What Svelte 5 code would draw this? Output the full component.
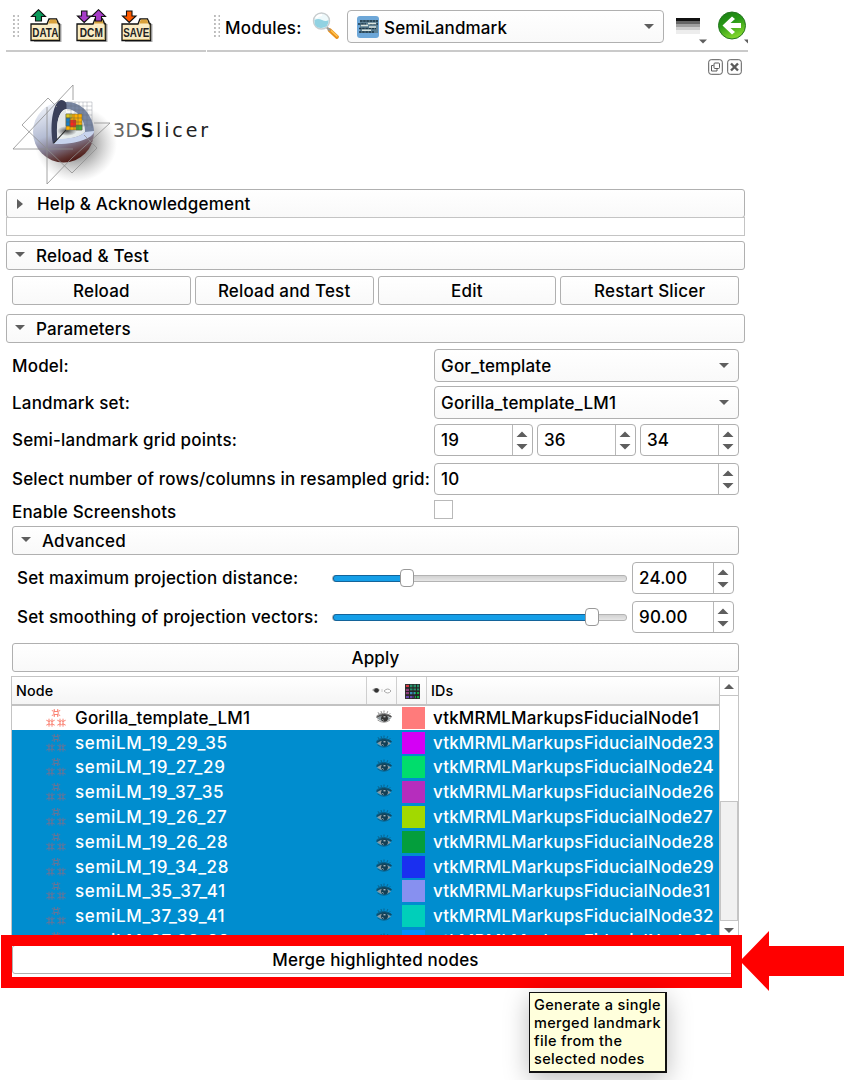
<script>
  const nodes = [
    ['Gorilla_template_LM1', '#ff7b7b', '1'],
    ['semiLM_19_29_35', '#d400f5', '23'],
    ['semiLM_19_27_29', '#00dd6c', '24'],
    ['semiLM_19_37_35', '#b62dbd', '26'],
    ['semiLM_19_26_27', '#a2d900', '27'],
    ['semiLM_19_26_28', '#049e3c', '28'],
    ['semiLM_19_34_28', '#1a2ff0', '29'],
    ['semiLM_35_37_41', '#8790f0', '31'],
    ['semiLM_37_39_41', '#00cfba', '32'],
    ['semiLM_37_38_39', '#0090ff', '33']
  ];
  const sliders = [
    { label: 'Set maximum projection distance:', fill: 25.2, value: '24.00' },
    { label: 'Set smoothing of projection vectors:', fill: 88.4, value: '90.00' }
  ];
  const files = [
    { label: 'DATA', up: '#0a9a5b', down: '' },
    { label: 'DCM', up: '#a63cc8', down: '#a63cc8' },
    { label: 'SAVE', up: '', down: '#ff5a00' }
  ];
</script>

{#snippet spin(value, cls)}
  <div class="spin {cls}">
    <span>{value}</span>
    <svg width="20" height="30" viewBox="0 0 20 30">
      <path d="M.5 0V30" stroke="#b8b8b8" />
      <path d="M4.500 12L10 6.500L15.500 12ZM4.500 19L10 24.500L15.500 19Z" fill="#5e5e5e" />
    </svg>
  </div>
{/snippet}

{#snippet combo(value)}
  <div class="combo"><span>{value}</span><i class="down"></i></div>
{/snippet}

{#snippet section(title, open)}
  <div class="section"><i class={open ? 'down' : 'right'}></i><span>{title}</span></div>
{/snippet}

{#snippet eye()}
  <svg class="eye" width="18" height="16" viewBox="0 0 18 16">
    <path d="M1.500 6Q8 .5 16 6M4 4L3 2.200M6.500 3L6 1M9 2.500V.5M12 3L12.800 1.200M14 4.500L15.300 3.200" fill="none" stroke="currentColor" stroke-width=".9" opacity=".6" />
    <path d="M2 8.500Q8 2 16 8.500Q9 14 2 8.500Z" fill="#8d989d" />
    <path d="M1.500 7.500Q8 2 16.500 7" fill="none" stroke="currentColor" stroke-width="1.500" opacity=".85" />
    <circle cx="9.500" cy="8.300" r="3.400" fill="currentColor" />
    <path d="M8.500 6.800h2M7.500 9.500l1 .7" stroke="#dce3e5" />
    <path d="M2.500 10Q9 14.500 15 10" fill="none" stroke="currentColor" opacity=".5" />
  </svg>
{/snippet}

{#snippet markers()}
  <svg class="markers" width="20" height="20" viewBox="0 0 20 20" fill="none" stroke="currentColor" stroke-width=".9">
    <path transform="translate(10 5)" d="M-4.200-2.500L-1.500-1.500L-1.800-4M4.200-2.500L1.500-1.500L1.800-4M-4.200 2.500L-1.500 1.500L-1.800 4M4.200 2.500L1.500 1.500L1.800 4M-1.500-1.500H1.500L2.500 0L1.500 1.500H-1.500L-2.500 0Z" />
    {#each [4.5, 15.5] as x}
      <path transform="translate({x} 14.700)" d="M-4.200-2.500L-1.500-1.200L-1.500-4M4.200-2.500L1.500-1.200V-4M-4.200 2.500L-1.500 1.200V4M4.200 2.500L1.500 1.200V4M-1.500-1.200L0-2L1.500-1.200V1.200L0 2L-1.500 1.200Z" />
    {/each}
  </svg>
{/snippet}

<div class="window">
  <header class="toolbar">
    <div class="files">
      <i class="grip"></i>
      {#each files as f}
        <svg class="file" width="34" height="35" viewBox="0 0 34 35">
          <path d="M3 15h16l2-4h7l2 4h1.500v18H4z" fill="#777" opacity=".6" />
          <path d="M1 15H17l2-5h7.500l2 5h1V31.500H1Z" fill="#faecc4" stroke="#111" stroke-width="1.300" />
          <path d="M18 14.500l2-4h6l1.500 4Z" fill="#d9a13c" />
          <path d="M2 30.500H28.700V15.500" fill="none" stroke="#bba566" />
          {#if f.up}<path transform="translate({f.down ? 14 : 0} 0)" d="M1.500 7.500L8.500 .7L15.500 7.500H11.500V12H5.500V7.500Z" fill={f.up} stroke="#111" stroke-width="1.100" />{/if}
          {#if f.down}<path d="M5.500 2H11V7H15L8.200 13.500L1.500 7H5.500Z" fill={f.down} stroke="#111" stroke-width="1.100" />{/if}
          <text x="15.300" y="27.800" textLength={f.label === 'DCM' ? 23 : 26} lengthAdjust="spacingAndGlyphs">{f.label}</text>
        </svg>
      {/each}
    </div>
    <div class="modules">
      <i class="grip"></i>
      <span class="mlabel">Modules:</span>
      <svg class="search" width="28" height="28" viewBox="0 0 28 28">
        <path d="M17.500 18L25 25" stroke="#e9901b" stroke-width="3.800" stroke-linecap="round" />
        <path d="M19 18.500L25.500 24.500" stroke="#ffc653" stroke-width="1.500" />
        <path d="M14.500 15L18 18.500" stroke="#999" stroke-width="2.200" />
        <circle cx="9.500" cy="9" r="8" fill="#eef9fb" stroke="#c8cdcf" stroke-width="1.400" />
        <path d="M2.500 8Q6 6 10 8T16.500 8Q17 15.500 9.500 16T2.500 8Z" fill="#91d2e2" />
        <path d="M4 6Q6 3 10 3" fill="none" stroke="#fff" stroke-width="2" />
      </svg>
      <div class="combo module">
        <svg width="22" height="22" viewBox="0 0 22 22">
          <rect width="22" height="22" rx="3" fill="#6da7d8" />
          <rect x="3" y="4" width="18" height="13" fill="#5c7f92" />
          <path d="M3 5h18M1 8h8m4 0h8M2 12.500h17M2 16h15" stroke="#1d3747" stroke-width="1.500" stroke-dasharray="2.500 .7" />
          <path d="M4 9.500h7M11 7.500h8M12 11h7M5 14.200h9" stroke="#dce5df" stroke-width="1.500" />
        </svg>
        <span>SemiLandmark</span><i class="down"></i>
      </div>
      <svg class="history" width="32" height="29" viewBox="0 0 32 29">
        <path d="M0 3H24V6H0Z" fill="#111" /><path d="M0 6H24V9H0Z" fill="#666" /><path d="M0 9H24V12H0Z" fill="#a0a0a0" /><path d="M0 12H24V15H0Z" fill="#cecece" /><path d="M0 15H24V19H0Z" fill="#ededed" />
        <path d="M23 24.500h8l-4 4Z" fill="#5e5e5e" />
      </svg>
      <svg class="back" width="30" height="34" viewBox="0 0 30 34">
        <defs><linearGradient id="green" x2=".4" y2="1"><stop stop-color="#177a12" /><stop offset=".5" stop-color="#2a9a18" /><stop offset="1" stop-color="#7fd42b" /></linearGradient></defs>
        <circle cx="14" cy="15.500" r="13.500" fill="url(#green)" stroke="#23751f" />
        <path d="M14 6.500L4.500 15.500L14 24.500L17 22L12.500 18H23V13H12.500L17 9Z" fill="#fff" />
        <path d="M26 29.500h6l-2 4Z" fill="#5e5e5e" />
      </svg>
    </div>
  </header>

  <div class="dock">
    <svg width="15" height="16" viewBox="0 0 15 16" fill="none" stroke="#5b5b5b"><rect x=".7" y=".7" width="13.600" height="14.600" rx="2.500" /><rect x="6" y="4" width="5.500" height="5.500" rx="1" /><path d="M5.500 6.500h-2v5.500h5.500v-2" /></svg>
    <svg width="15" height="16" viewBox="0 0 15 16" fill="none" stroke="#5b5b5b"><rect x=".7" y=".7" width="13.600" height="14.600" rx="2.500" /><path d="M4 4.500L11 11.500M11 4.500L4 11.500" stroke-width="2.400" /></svg>
  </div>

  <svg class="logo" width="220" height="109" viewBox="0 0 220 109">
    <defs>
      <radialGradient id="shade"><stop offset=".35" stop-color="#333" stop-opacity=".5" /><stop offset="1" stop-color="#777" stop-opacity="0" /></radialGradient>
      <linearGradient id="ball" x1=".25" y1="0" x2=".6" y2="1"><stop stop-color="#f2f5fb" /><stop offset=".5" stop-color="#b4bcd3" /><stop offset=".72" stop-color="#80788c" /><stop offset=".9" stop-color="#5e3432" /><stop offset="1" stop-color="#4c1712" /></linearGradient>
      <linearGradient id="inner" x2=".6" y2="1"><stop stop-color="#fff" /><stop offset="1" stop-color="#e2e8e8" /></linearGradient>
      <radialGradient id="core"><stop stop-color="#222" stop-opacity=".8" /><stop offset="1" stop-color="#222" stop-opacity="0" /></radialGradient>
    </defs>
    <ellipse cx="76" cy="64" rx="41" ry="38" fill="url(#shade)" />
    <circle cx="63.500" cy="52" r="30.500" fill="url(#ball)" />
    <path d="M65 22C81 21 93 34 94 52L85 52C85 40 77 28 65 29Z" fill="#7886a2" />
    <path d="M57 60C55 44 57 29 66 29C77 29 85 40 85 52C80 57 70 59 57 60Z" fill="url(#inner)" />
    <path d="M53 64C49 42 54 21 61 20Q65 20 66.500 24V29C58 30 56 46 57.500 59Z" fill="#3a405a" />
    <path d="M53 64L57.500 59C70 59 80 57 85 52L94 51C95 56 80 65 53 64Z" fill="#c7d3ed" />
    <path d="M66 30V50L57.500 59C55.500 42 59 31 66 30Z" fill="#e3e6e8" />
    <ellipse cx="67" cy="51" rx="10" ry="5" fill="url(#core)" />
    <path d="M53.500 63.500L66 50" stroke="#222" stroke-width="1.100" />
    <g stroke="#626341" stroke-width=".5">
      <path d="M66 34h16v16H66z" fill="#ffad00" /><path d="M66 34h6v4h-6z" fill="#d7c620" /><path d="M66 38h4v8h-4z" fill="#147bc7" /><path d="M70 40h6v7h-6z" fill="#ff251b" /><path d="M76 45h6v5h-6z" fill="#44ac37" />
      <path d="M70 34v16M74 34v16M78 34v16M66 38h16M66 42h16M66 46h16" fill="none" />
    </g>
    <path d="M67 22h25v26M71 22v12M75 22v12M79 22v12M83 22v25M87 22v25M67 26h25M67 30h25M82 35h10M82 40h10M82 45h10" fill="none" stroke="#626b76" stroke-width=".3" />
    <path d="M73 20V5L13 69H73M94 43H110L72 78L47 104V27M48 18L22 45L72 93L97 68L84 55M48 18L57 27" fill="none" stroke="#8e8e8e" stroke-width=".8" />
    <text x="113" y="56.500" class="three">3D</text><text x="141" y="56.500" class="s">S</text><text x="156" y="56.500" class="licer">licer</text>
  </svg>

  <main>
    {@render section('Help & Acknowledgement', false)}
    <div class="empty"></div>
    {@render section('Reload & Test', true)}
    <div class="buttons">
      {#each ['Reload', 'Reload and Test', 'Edit', 'Restart Slicer'] as b}<button>{b}</button>{/each}
    </div>
    {@render section('Parameters', true)}

    <div class="params">
      <div class="row model"><label>Model:</label>{@render combo('Gor_template')}</div>
      <div class="row lm"><label>Landmark set:</label>{@render combo('Gorilla_template_LM1')}</div>
      <div class="row grid"><label>Semi-landmark grid points:</label><div class="triple">{@render spin('19', '')}{@render spin('36', '')}{@render spin('34', '')}</div></div>
      <div class="row rows"><label>Select number of rows/columns in resampled grid:</label>{@render spin('10', '')}</div>
      <div class="row shots"><label>Enable Screenshots</label><i class="check"></i></div>
      {@render section('Advanced', true)}
      <div class="sliders">
        {#each sliders as s}
          <div class="slide">
            <label>{s.label}</label>
            <div class="track"><div class="fill" style="width:{s.fill}%"></div><i class="knob"></i></div>
            {@render spin(s.value, 'dec')}
          </div>
        {/each}
      </div>
      <button class="apply">Apply</button>

      <div class="table">
        <div class="list">
          <div class="thead">
            <span>Node</span>
            <span><svg width="22" height="10" viewBox="0 0 22 10"><path d="M1 4Q5 0 9 4Q5 8 1 4" fill="#999" /><circle cx="5.500" cy="4.500" r="2.300" fill="#333" /><path d="M13 5Q17 1 20 5Q17 9 13 5Z" fill="#fff" stroke="#aaa" /><path d="M11 3v3" stroke="#ccc" /></svg></span>
            <span><svg width="15" height="15" viewBox="0 0 15 15"><path d="M0 0h15v15H0z" fill="#333" /><path d="M1 2h3" stroke="#d73942" stroke-width="2" /><path d="M5 2h9M5 5h9" stroke="#259069" stroke-width="2.500" /><path d="M1 6h3M1 9h3" stroke="#8d3c7a" stroke-width="2.500" /><path d="M5 9h5" stroke="#388db8" stroke-width="3" /><path d="M1 13h8" stroke="#6947af" stroke-width="2" /><path d="M10 9h4M10 13h4" stroke="#13aa43" stroke-width="2" /><path d="M4.500 0v15M8 0v15M11.500 0v15M0 4h15M0 7.500h15M0 11h15" stroke="#252525" /></svg></span>
            <span>IDs</span>
          </div>
          {#each nodes as [name, color, id], i}
            <div class="node" class:selected={i > 0}>
              <span class="name">{@render markers()}<b>{name}</b></span>
              <span class="vis">{@render eye()}</span>
              <i style="background:{color}"></i>
              <span class="id">vtkMRMLMarkupsFiducialNode{id}</span>
            </div>
          {/each}
        </div>
        <div class="scroll">
          <div class="cap"><i class="up"></i></div>
          <div class="thumb"></div>
          <div class="cap end"><i class="down"></i></div>
        </div>
      </div>
      <button class="merge">Merge highlighted nodes</button>
    </div>
  </main>

  <div class="frame"></div>
  <svg class="arrow" width="104" height="60" viewBox="0 0 104 60"><path d="M0 30L29 0V15H104V45H29V60Z" fill="#f00" /></svg>
  <div class="tip">Generate a single<br />merged landmark<br />file from the<br />selected nodes</div>
</div>

<style>
  :global(body) { background: #fff; }
  * { box-sizing: border-box; }
  .window { position: relative; width: 844px; height: 1080px; overflow: hidden; font: 500 17px/22px Inter, sans-serif; letter-spacing: 0.180px; color: #000; }
  span, label, button { white-space: nowrap; }
  .toolbar { display: flex; width: 748px; height: 52px; padding-left: 6px; gap: 1px; }
  .files, .modules { display: flex; align-items: flex-start; border-bottom: 2px solid #cacaca; }
  .files { width: 200px; padding-left: 7px; }
  .modules { flex: 1; padding-left: 7px; }
  .grip { width: 6px; height: 22px; margin-top: 15px; flex: none; background: radial-gradient(circle at 1px 1px, #bbb 0.8px, transparent 1px) 0 0 / 4.500px 4px; }
  .file { margin: 9px 0 0 11px; flex: none; }
  .file + .file { margin-left: 11.500px; }
  .file text { font: 700 12.500px "Liberation Sans", sans-serif; text-anchor: middle; fill: #222; letter-spacing: 0; }
  .mlabel { margin: 17px 0 0 5px; width: 76px; }
  .search { margin: 12px 0 0 11px; flex: none; }
  .combo { display: flex; align-items: center; justify-content: space-between; height: 33px; padding: 0 9px 0 6px; border: 1px solid #b0b0b0; border-radius: 4px; background: linear-gradient(#fff, #f9f9f9); }
  .module { width: 317px; margin: 10px 0 0 7px; flex: none; justify-content: flex-start; padding-left: 9px; letter-spacing: 0.150px; }
  .module span { margin: 2px 0 0 5px; flex: 1; }
  .history { margin: 15px 0 0 12px; flex: none; }
  .back { margin: 10px 0 0 10px; flex: none; }
  .down, .up { width: 0; height: 0; border: 5.500px solid transparent; border-top: 5.500px solid #5e5e5e; border-bottom: 0; flex: none; }
  .up { border-top: 0; border-bottom: 5.500px solid #5e5e5e; }
  .right { width: 0; height: 0; border: 5.500px solid transparent; border-left: 6px solid #5e5e5e; border-right: 0; }
  .dock { display: flex; gap: 4px; padding: 7px 0 0 708px; height: 28px; }
  .logo { display: block; }
  .logo text { font-family: "DejaVu Sans", sans-serif; font-size: 19px; font-weight: 400; fill: #333; }
  .logo .three { fill: #666; letter-spacing: 0.500px; }
  .logo .s { fill: #000; stroke: #000; stroke-width: 0.5px; }
  .logo .licer { letter-spacing: 2.900px; fill: #222; }
  main { width: 739px; margin-left: 6px; }
  .section { display: flex; align-items: center; height: 29px; padding-left: 8px; border: 1px solid #b0b0b0; border-radius: 3px; background: linear-gradient(#fff, #f9f9f9); }
  .section span { margin-left: 11px; padding-top: 1px; }
  .section .right { margin-left: 2px; margin-right: 3px; }
  .section .down { margin-top: -3px; }
  .empty { height: 19px; margin: -1px 0 5px; border: 1px solid #c4c4c4; }
  .buttons { display: flex; gap: 4px; padding: 6px 6px 9px 6px; }
  button { display: block; font: inherit; letter-spacing: inherit; color: inherit; height: 29px; padding: 0; border: 1px solid #b0b0b0; border-radius: 3px; background: linear-gradient(#fff, #f9f9f9); }
  .buttons button { flex: 1; }
  .params { padding: 6px 6px 0; }
  .row { display: grid; grid-template-columns: 422px 305px; align-items: center; }
  .model, .lm { margin-bottom: 4px; }
  .grid { margin-top: 5px; }
  .triple { display: grid; grid-template-columns: 99px 99px 99px; gap: 4px; }
  .spin { display: flex; align-items: center; justify-content: space-between; height: 32px; padding-left: 6px; border: 1px solid #b0b0b0; border-radius: 4px; background: #fff; overflow: hidden; }
  .rows { margin-top: 7px; }
  .shots { height: 31px; }
  .shots label { padding-top: 2px; }
  .check { width: 19px; height: 19px; margin-top: -2px; border: 1px solid #b9b9b9; }
  .sliders { padding: 7px 4px 10px 5px; display: grid; gap: 7px; }
  .slide { display: grid; grid-template-columns: 315px 295px 102px; column-gap: 0; align-items: center; }
  .dec { margin-left: 5px; width: 102px; }
  .track { display: flex; align-items: center; height: 7px; border: 1px solid #b3b3b3; border-radius: 3px; background: linear-gradient(#d2d2d2, #e6e6e6); }
  .fill { height: 7px; border: 1px solid #14649a; border-radius: 3px; background: #159fe8; flex: none; }
  .knob { width: 14px; height: 18px; margin-left: -7px; border: 1px solid #999; border-radius: 4px; background: #fff; flex: none; }
  .apply, .merge { width: 727px; }
  .table { display: flex; width: 728px; height: 269px; margin: 4px 0 0 -1px; border: 1px solid #c4c4c4; border-bottom: 0; overflow: hidden; }
  .list { width: 707px; flex: none; }
  .thead, .node { display: grid; grid-template-columns: 355px 30px 30px 292px; }
  .thead { height: 28.500px; font-size: 14.300px; border-bottom: 2px solid #c2c2c2; background: linear-gradient(#fff, #f5f5f5); }
  .thead span { display: flex; align-items: center; padding: 2px 0 0 4px; border-right: 1px solid #cfcfcf; }
  .thead span:nth-child(2) { padding-left: 4px; }
  .thead span:nth-child(3) { padding-left: 8px; }
  .thead span:last-child { padding-left: 4px; border: 0; }
  .node { height: 24.800px; align-items: center; }
  .node b { font-weight: 500; }
  .selected b { letter-spacing: 0.620px; }
  .node i { width: 23px; height: 22px; margin-left: 5px; }
  .selected { color: #fff; background: #008dcf; }
  .name { display: flex; align-items: center; padding-left: 34px; gap: 9px; }
  .markers { color: #f97665; flex: none; }
  .selected .markers { color: #76708f; }
  .vis { display: flex; padding-left: 8px; color: #333; }
  .selected .vis { color: #123e54; }
  .id { padding-left: 6px; letter-spacing: 0.160px; }
  .scroll { width: 19px; background: #fff; border-left: 1px solid #c5c5c5; }
  .cap { display: flex; align-items: center; justify-content: center; height: 19px; border-bottom: 1px solid #c5c5c5; }
  .thumb { height: 120px; margin-top: 105px; border: 1px solid #c5c5c5; background: #f1f1f1; }
  .merge { position: relative; height: 29px; background: #fff; }
  .frame { position: absolute; left: 1px; top: 935px; width: 741px; height: 53px; border: 11px solid #f00; }
  .arrow { position: absolute; left: 740px; top: 931px; }
  .tip { position: absolute; left: 529px; top: 992px; width: 138px; height: 81px; padding: 3px 0 0 4px; border: 2px solid #111; border-width: 1px 2px 2px 1px; background: #ffffdc; box-shadow: 0 6px 24px #0004; font-size: 14.500px; letter-spacing: 0.350px; line-height: 18px; white-space: nowrap; }
</style>
